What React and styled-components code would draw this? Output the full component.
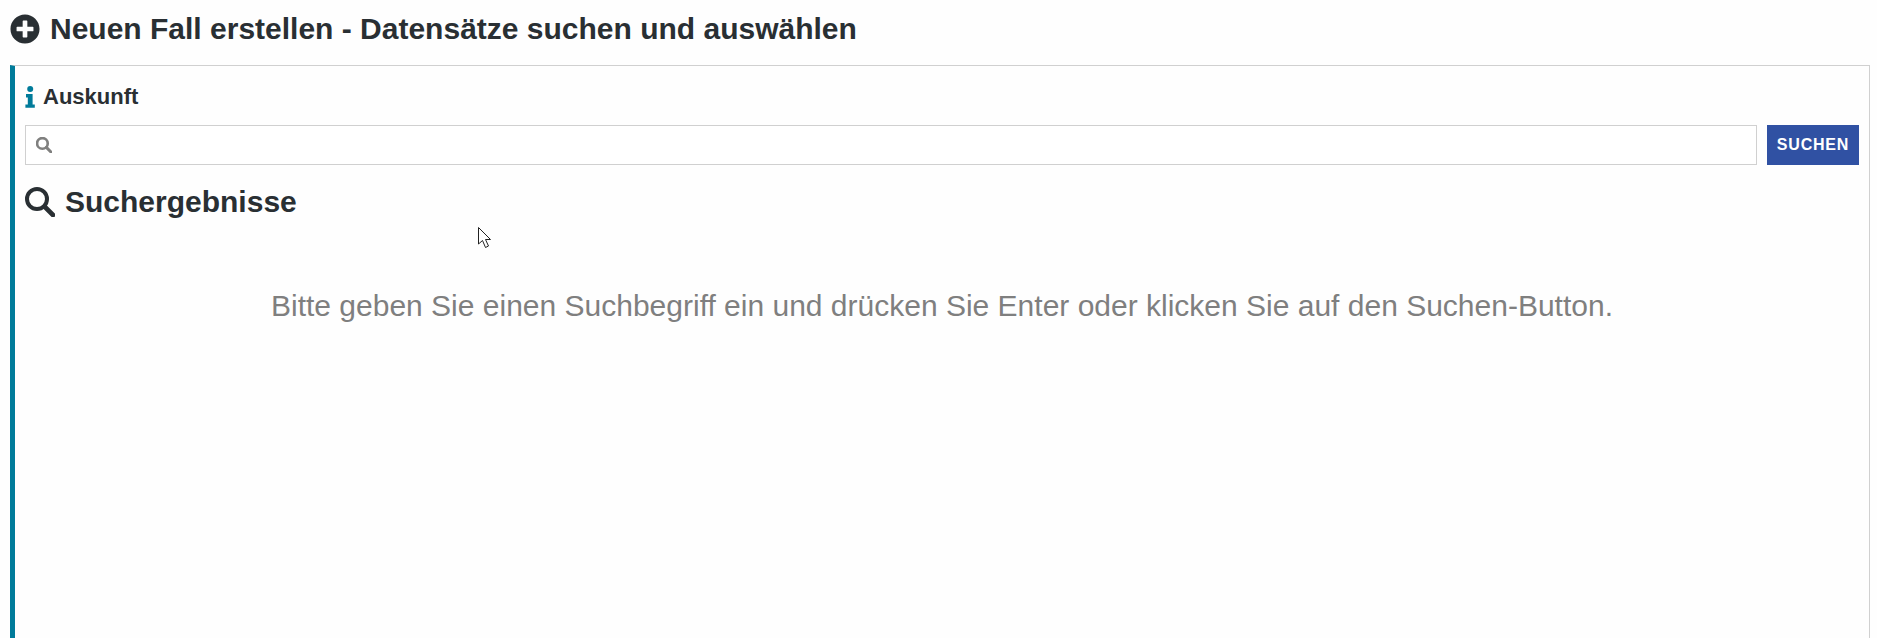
import React from "react";
import styled, { createGlobalStyle } from "styled-components";
import { FaPlusCircle } from "react-icons/fa";

const Global = createGlobalStyle`
  html, body { margin: 0; padding: 0; background: #fefefe; height: 100%; overflow: hidden; }
  body { font-family: "Liberation Sans", Arial, sans-serif; color: #292f33; }
`;

const Page = styled.div`
  position: relative;
  height: 638px;
  padding: 9px 7px 0 10px;
  box-sizing: border-box;
  display: flex;
  flex-direction: column;
`;

const PageTitle = styled.h1`
  display: flex;
  align-items: center;
  gap: 10px;
  margin: 0 0 16px;
  height: 40px;
  font-size: 30px;
  line-height: 40px;
  font-weight: 700;
  svg { width: 30px; height: 30px; flex: none; }
`;

const Panel = styled.section`
  flex: 1;
  border: 1px solid #d0d0d0;
  border-left: 5px solid #007b9a;
  border-bottom: none;
  padding: 17px 10px 0 10px;
  display: flex;
  flex-direction: column;
`;

const SectionLabel = styled.div`
  display: flex;
  align-items: center;
  height: 28px;
  font-size: 22px;
  font-weight: 700;
  gap: 8px;
  margin-bottom: 14px;
  svg { width: 10px; height: 22px; color: #007b9a; flex: none; }
`;

const SearchRow = styled.div`
  display: flex;
  gap: 10px;
  height: 40px;
`;

const InputWrap = styled.label`
  flex: 1;
  display: flex;
  align-items: center;
  gap: 8px;
  padding: 0 10px;
  border: 1px solid #d0d0d0;
  background: #fff;
  svg { width: 16px; height: 16px; color: #80807f; flex: none; }
`;

const Input = styled.input`
  flex: 1;
  border: 0;
  outline: 0;
  background: transparent;
  font: inherit;
`;

const SearchButton = styled.button`
  width: 92px;
  border: 0;
  background: #3051a3;
  color: #fff;
  font-family: inherit;
  font-size: 16px;
  font-weight: 700;
  letter-spacing: 0.8px;
  padding: 0;
`;

const ResultsTitle = styled.h2`
  display: flex;
  align-items: center;
  gap: 10px;
  margin: 17px 0 0;
  height: 40px;
  font-size: 30px;
  font-weight: 700;
  svg { width: 30px; height: 30px; flex: none; }
`;

const Hint = styled.p`
  margin: 64px 0 0;
  text-align: center;
  font-size: 30px;
  line-height: 40px;
  color: #7f7f7f;
`;

const Cursor = styled.svg`
  position: absolute;
  left: 478px;
  top: 227px;
  width: 15px;
  height: 22px;
`;

const SearchIcon = ({ weight = 4 }) => (
  <svg viewBox="0 0 30 30" fill="none" stroke="currentColor" strokeWidth={weight} strokeLinecap="round">
    <circle cx="12" cy="12" r="10" />
    <path d="M19.5 19.5L28 28" strokeWidth={weight + 0.6} />
  </svg>
);

const InfoIcon = () => (
  <svg viewBox="0 0 10 22" fill="currentColor">
    <circle cx="5.2" cy="3" r="3" />
    <path d="M1 8h6.6v10.4h2.2v3.4H0.4v-3.4h2.4v-7H1z" />
  </svg>
);

export default function App() {
  return (
    <>
      <Global />
      <Page>
        <PageTitle>
          <FaPlusCircle />
          Neuen Fall erstellen - Datensätze suchen und auswählen
        </PageTitle>
        <Panel>
          <SectionLabel>
            <InfoIcon />
            Auskunft
          </SectionLabel>
          <SearchRow>
            <InputWrap>
              <SearchIcon weight={5} />
              <Input aria-label="Suchbegriff" />
            </InputWrap>
            <SearchButton>SUCHEN</SearchButton>
          </SearchRow>
          <ResultsTitle>
            <SearchIcon />
            Suchergebnisse
          </ResultsTitle>
          <Hint>Bitte geben Sie einen Suchbegriff ein und drücken Sie Enter oder klicken Sie auf den Suchen-Button.</Hint>
        </Panel>
        <Cursor viewBox="0 0 15 22">
          <path d="M0.5 0.5V17L4.5 13.5L7.5 20.5L10.5 19L7.5 12.5H12.5Z" fill="#fff" stroke="#222" strokeWidth="1" />
        </Cursor>
      </Page>
    </>
  );
}
